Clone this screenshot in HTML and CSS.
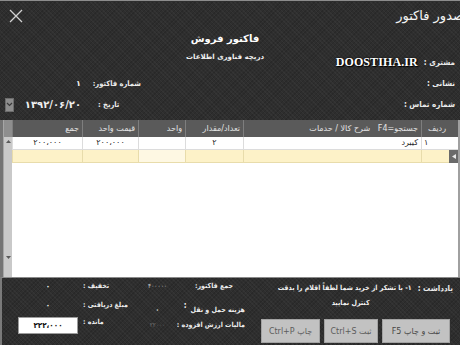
FILE: index.html
```html
<!DOCTYPE html>
<html lang="fa" dir="rtl">
<head>
<meta charset="utf-8">
<title>صدور فاکتور</title>
<link rel="stylesheet" href="styles.css">
</head>
<body>
<div class="win">
  <header class="top">
    <div class="col-right">
      <div class="title">صدور فاکتور</div>
      <div class="spacer"></div>
      <div class="field"><span class="lbl">مشتری :</span><span class="brand">DOOSTIHA.IR</span></div>
      <div class="field"><span class="lbl">نشانی :</span></div>
      <div class="field"><span class="lbl">شماره تماس :</span></div>
    </div>
    <div class="col-center">
      <div class="h1">فاکتور فروش</div>
      <div class="h2">دریچه فناوری اطلاعات</div>
    </div>
    <div class="col-left">
      <div class="closebar">
        <svg class="close" width="14" height="14" viewBox="0 0 14 14"><path d="M1 1 L13 13 M13 1 L1 13" stroke="#d2d2d2" stroke-width="1.3" fill="none"/></svg>
      </div>
      <div class="lspacer"></div>
      <div class="lfield"><span class="llbl">شماره فاکتور:</span><span class="lval">۱</span></div>
      <div class="lfield"><span class="llbl">تاریخ :</span><span class="lval date">۱۳۹۲/۰۶/۲۰</span><span class="dd"><svg width="7" height="5" viewBox="0 0 7 5"><path d="M1 1 L3.5 3.5 L6 1" stroke="#3a3a3a" stroke-width="1.2" fill="none"/></svg></span></div>
    </div>
  </header>

  <section class="grid">
    <div class="bR"></div>
    <div class="rowhead">
      <div class="rh-head"></div>
      <div class="rh-r1"></div>
      <div class="rh-r2"><svg width="4" height="5" viewBox="0 0 4 5"><path d="M0 2.5 L4 0 L4 5 Z" fill="#e8e8e8"/></svg></div>
    </div>
    <div class="table">
      <div class="trow thead">
        <div class="c">ردیف</div>
        <div class="c">جستجو=F4&nbsp;&nbsp; شرح کالا / حدمات</div>
        <div class="c">تعداد/مقدار</div>
        <div class="c">واحد</div>
        <div class="c">قیمت واحد</div>
        <div class="c">جمع</div>
      </div>
      <div class="trow r1">
        <div class="c left">۱</div>
        <div class="c">کیبرد</div>
        <div class="c ctr">۲</div>
        <div class="c"></div>
        <div class="c ctr">۲۰۰،۰۰۰</div>
        <div class="c ctr">۲۰۰،۰۰۰</div>
      </div>
      <div class="trow r2">
        <div class="c"></div>
        <div class="c"></div>
        <div class="c"></div>
        <div class="c light"></div>
        <div class="c"></div>
        <div class="c"></div>
      </div>
    </div>
    <div class="scroll">
      <div class="sc-head"></div>
      <div class="sc-track">
        <svg width="5" height="3" viewBox="0 0 5 3"><path d="M0 3 L2.5 0 L5 3 Z" fill="#5a5a5a"/></svg>
        <svg width="5" height="3" viewBox="0 0 5 3"><path d="M0 0 L2.5 3 L5 0 Z" fill="#5a5a5a"/></svg>
      </div>
    </div>
    <div class="bL"></div>
  </section>

  <footer class="bottom">
    <div class="note-col">
      <div class="note">
        <span class="nlbl">یادداشت :</span>
        <span class="ntext">۱- با تشکر از خرید شما لطفاً اقلام را بدقت<br>کنترل نمایید</span>
      </div>
      <div class="buttons">
        <button class="btn b1">ثبت و چاپ F5</button>
        <button class="btn b2">ثبت Ctrl+S</button>
        <button class="btn b3">چاپ Ctrl+P</button>
      </div>
    </div>
    <div class="mid-col">
      <div class="mrow ma"><span class="mlbl">جمع فاکتور:</span><span class="mval dim">۴۰۰۰۰۰</span></div>
      <div class="mrow mb"><span class="mlbl">هزینه حمل و نقل</span><span class="colon">:</span><span class="mval">۰</span></div>
      <div class="mrow mc"><span class="mlbl">مالیات ارزش افزوده :</span><span class="mval off">۲۲۰۰۰</span></div>
    </div>
    <div class="left-col">
      <div class="lrow la"><span class="blbl">تخفیف :</span><span class="bval">۰</span></div>
      <div class="lrow lb"><span class="blbl">مبلغ دریافتی :</span><span class="bval">۰</span></div>
      <div class="lrow lc"><span class="blbl">مانده :</span><span class="bval box">۲۲۲،۰۰۰</span></div>
    </div>
  </footer>
</div>
</body>
</html>
```

FILE: styles.css
```css
* { box-sizing: border-box; margin: 0; padding: 0; }
html, body { width: 460px; height: 345px; overflow: hidden; }
body {
  background: #2f2f2f;
  font-family: "DejaVu Sans", sans-serif;
  direction: rtl;
  color: #f0f0f0;
}
.win {
  width: 460px;
  height: 345px;
  display: flex;
  flex-direction: column;
  overflow: hidden;
  border-top: 1px solid #8c8c8c;
  background-color: #2e2e2e;
  background-image:
    repeating-linear-gradient(45deg, rgba(255,255,255,0.03) 0 1px, transparent 1px 3px),
    repeating-linear-gradient(-45deg, rgba(0,0,0,0.12) 0 1px, transparent 1px 3px);
}

/* ---------- top ---------- */
.top { height: 119px; display: flex; flex-shrink: 0; }
.col-right { width: 165px; display: flex; flex-direction: column; padding-right: 5px; }
.title {
  height: 29px;
  line-height: 29px;
  font-size: 13px;
  color: #f4f4f4;
  white-space: nowrap;
  margin-right: -9px;
}
.spacer { height: 22px; }
.field { height: 21px; display: flex; align-items: center; gap: 6px; }
.lbl {
  font-family: "DejaVu Sans Condensed", "DejaVu Sans", sans-serif;
  font-stretch: condensed;
  font-size: 8px;
  font-weight: bold;
  color: #ececec;
  white-space: nowrap;
}
.brand {
  direction: ltr;
  font-family: "Liberation Serif", "DejaVu Serif", serif;
  font-weight: bold;
  font-size: 12px;
  color: #ffffff;
  text-shadow: 0 0 2px #000, 1px 1px 1px #000;
  letter-spacing: 0.1px;
}
.col-center {
  flex: 1;
  text-align: center;
  padding-top: 30px;
  padding-right: 10px;
}
.h1 { font-size: 10px; font-weight: bold; line-height: 16px; color: #fff; }
.h2 { font-size: 7px; font-weight: bold; line-height: 12px; margin-top: 4px; color: #f2f2f2; }
.col-left { width: 165px; display: flex; flex-direction: column; }
.closebar { height: 29px; display: flex; align-items: center; justify-content: flex-end; padding-left: 9px; }
.lspacer { height: 43px; }
.lfield { height: 21px; display: flex; align-items: center; }
.llbl {
  margin-right: 24px;
  width: 43px;
  text-align: left;
  font-family: "DejaVu Sans Condensed", "DejaVu Sans", sans-serif;
  font-stretch: condensed;
  font-size: 7.5px;
  font-weight: bold;
  color: #ececec;
  white-space: nowrap;
}
.lval { margin-right: 17px; width: 58px; text-align: right; font-size: 8px; font-weight: bold; }
.date { font-size: 10px; }
.dd {
  margin-right: 9px;
  width: 9px;
  height: 14px;
  background: #8d8d8d;
  border: 1px solid #6c6c6c;
  display: flex;
  align-items: center;
  justify-content: center;
}

/* ---------- grid ---------- */
.grid { height: 157px; display: flex; flex-shrink: 0; background: #fff; }
.bR { width: 2px; background: #a0a0a0; }
.bL { width: 3px; background: #747474; }
.rowhead { width: 9px; display: flex; flex-direction: column; }
.rh-head { height: 17px; background: #5a5a5a; }
.rh-r1 { height: 13px; background: #ffffff; border-bottom: 1px solid #dcdcdc; }
.rh-r2 { height: 13px; background: #6a6a6a; display: flex; align-items: center; justify-content: center; }
.table { width: 437px; display: flex; flex-direction: column; }
.trow { display: grid; grid-template-columns: 28px 178px 58px 47px 56px 70px; }
.c {
  border-left: 1px solid #dcdcdc;
  border-bottom: 1px solid #dcdcdc;
  font-size: 8px;
  padding-right: 3px;
  white-space: nowrap;
  overflow: hidden;
  text-align: right;
}
.thead { height: 17px; background: #5a5a5a; }
.thead .c { border-color: #7e7e7e; border-bottom: none; color: #e4e4e4; line-height: 17px; font-size: 8px; }
.r1 { height: 13px; background: #fff; }
.r1 .c { color: #1e1e1e; line-height: 12px; }
.r1 .left { text-align: left; padding-left: 2px; padding-right: 0; }
.r1 .ctr { text-align: center; padding-right: 0; }
.r2 { height: 13px; background: #fdf2c8; }
.r2 .c { border-color: #e8dcab; }
.r2 .light { background: #fef8e3; }
.scroll { width: 9px; display: flex; flex-direction: column; border-left: 1px solid #a6a6a6; }
.sc-head { height: 17px; background: #8e8e8e; }
.sc-track {
  flex: 1;
  background: #c9c9c9;
  display: flex;
  flex-direction: column;
  align-items: center;
  justify-content: space-between;
  padding: 3px 0 18px;
}

/* ---------- bottom ---------- */
.bottom {
  flex: 1;
  display: flex;
  border-top: 1px solid #8a8a8a;
  border-left: 2px solid #7a7a7a;
  font-family: "DejaVu Sans Condensed", "DejaVu Sans", sans-serif;
  font-stretch: condensed;
}
.note-col { width: 200px; display: flex; flex-direction: column; }
.note { height: 40px; display: flex; padding-right: 7px; padding-top: 3px; }
.nlbl { font-size: 8px; font-weight: bold; white-space: nowrap; line-height: 15px; color: #ececec; }
.ntext {
  width: 122px;
  margin-right: 6px;
  text-align: center;
  font-size: 7px;
  font-weight: bold;
  line-height: 15px;
  white-space: nowrap;
  color: #f2f2f2;
}
.buttons { display: flex; gap: 4px; padding-right: 10px; margin-top: 1px; }
.btn {
  height: 24px;
  background: #c2c2c2;
  border: 1px solid #a3a3a3;
  color: #5c5c5c;
  font-family: "DejaVu Sans", sans-serif;
  font-size: 8px;
  direction: rtl;
  white-space: nowrap;
}
.b1 { width: 68px; color: #474747; }
.b2 { width: 54px; }
.b3 { width: 59px; }
.mid-col { width: 120px; display: flex; flex-direction: column; padding-top: 1px; }
.mrow { display: flex; align-items: center; }
.ma { height: 13px; }
.mb { height: 15px; margin-top: 10px; }
.mc { height: 15px; }
.mlbl { font-size: 7px; font-weight: bold; white-space: nowrap; color: #ececec; }
.ma .mlbl { margin-right: 27px; }
.mb .mlbl, .mc .mlbl { margin-right: 15px; }
.colon { font-size: 8px; font-weight: bold; align-self: flex-start; margin-right: 4px; line-height: 8px; }
.mval { margin-right: auto; width: 35px; text-align: center; font-size: 7px; font-weight: bold; color: #f4f4f4; }
.mval.dim { color: #c8c8c8; font-weight: normal; font-size: 6.5px; }
.mval.off { color: #6e6e6e; font-weight: normal; font-size: 6.5px; }
.left-col { flex: 1; display: flex; flex-direction: column; padding-top: 1px; }
.lrow { display: flex; align-items: center; }
.la { height: 14px; }
.lb { height: 14px; margin-top: 5px; }
.lc { height: 18px; margin-top: 4px; align-items: flex-start; }
.blbl {
  margin-right: 8px;
  width: 49px;
  text-align: left;
  font-size: 7px;
  font-weight: bold;
  white-space: nowrap;
  color: #ececec;
  line-height: 13px;
}
.bval { margin-right: 5px; width: 60px; text-align: center; font-size: 8px; font-weight: bold; color: #f4f4f4; }
.box {
  height: 17px;
  margin-top: 1px;
  background: #fff;
  border: 1px solid #9c9c9c;
  color: #111;
  line-height: 15px;
  font-family: "DejaVu Sans", sans-serif;
}
```
